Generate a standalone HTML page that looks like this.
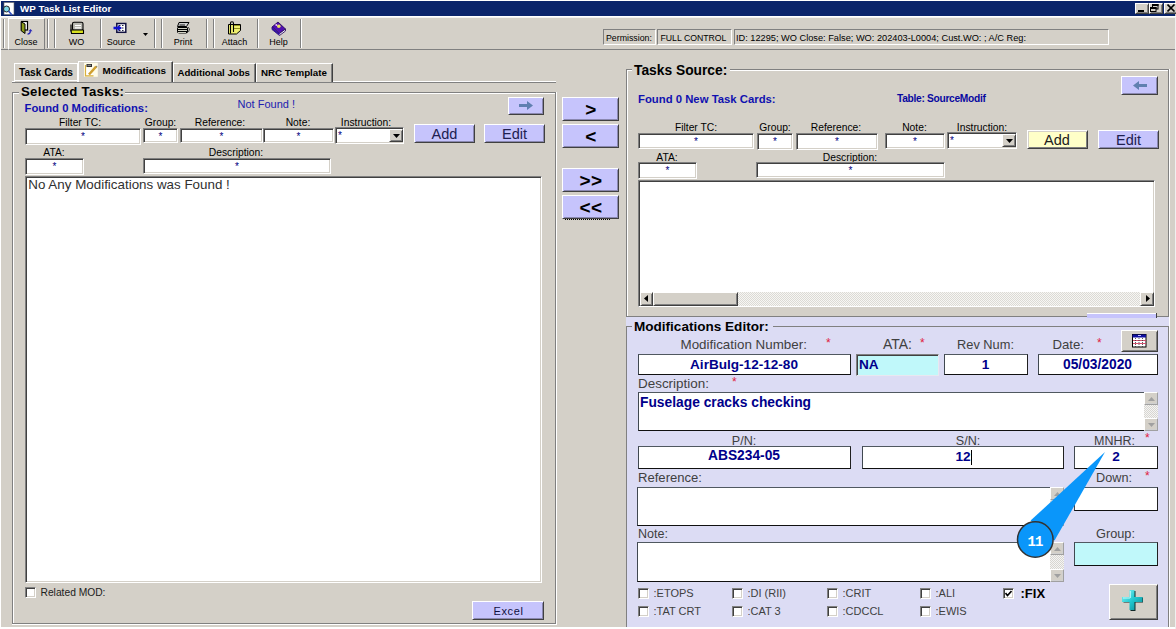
<!DOCTYPE html>
<html><head><meta charset="utf-8"><style>
html,body{margin:0;padding:0;}
body{width:1176px;height:629px;overflow:hidden;position:relative;background:#D4D0C8;font-family:"Liberation Sans",sans-serif;}
body>div,body>svg{position:absolute;}
</style></head><body>
<div style="left:0px;top:0px;width:1176px;height:629px;background:#D4D0C8"></div>
<div style="left:0px;top:0px;width:1px;height:629px;background:#fff"></div>
<div style="left:0px;top:0px;width:1176px;height:1px;background:#fff"></div>
<div style="left:1px;top:1px;width:1174px;height:15px;background:#0A246A"></div>
<svg style="left:2px;top:2px" width="14" height="14" viewBox="0 0 14 14">
<rect x="2" y="0.5" width="10" height="12" fill="#fff" stroke="#666" stroke-width="0.6"/>
<circle cx="4.5" cy="7" r="3" fill="#7fd8e8" stroke="#222" stroke-width="1"/>
<line x1="6.5" y1="9" x2="10" y2="13" stroke="#3050c0" stroke-width="1.6"/></svg>
<div style="left:20px;top:4px;font:bold 9.84px/9.84px 'Liberation Sans',sans-serif;color:#fff;white-space:pre;">WP Task List Editor</div>
<div style="left:1135px;top:3px;width:14px;height:11px;background:#D4D0C8;border:1px solid;border-color:#fff #404040 #404040 #fff;box-shadow:inset 1px 1px #D4D0C8,inset -1px -1px #808080;box-sizing:border-box"></div>
<div style="left:1149px;top:3px;width:14px;height:11px;background:#D4D0C8;border:1px solid;border-color:#fff #404040 #404040 #fff;box-shadow:inset 1px 1px #D4D0C8,inset -1px -1px #808080;box-sizing:border-box"></div>
<div style="left:1164px;top:3px;width:14px;height:11px;background:#D4D0C8;border:1px solid;border-color:#fff #404040 #404040 #fff;box-shadow:inset 1px 1px #D4D0C8,inset -1px -1px #808080;box-sizing:border-box"></div>
<div style="left:1138px;top:10px;width:6px;height:2px;background:#000"></div>
<svg style="left:1149px;top:3px" width="14" height="11" viewBox="1149 3 14 11">
<rect x="1152.5" y="4.5" width="5.5" height="4.5" fill="none" stroke="#000" stroke-width="1"/><rect x="1152" y="4" width="6.5" height="2" fill="#000"/>
<rect x="1150.5" y="7.5" width="5.5" height="4" fill="#D4D0C8" stroke="#000" stroke-width="1"/><rect x="1150" y="7" width="6.5" height="2" fill="#000"/></svg>
<svg style="left:1167px;top:4px" width="9" height="8" viewBox="0 0 9 8"><path d="M0.5 0.5L7.5 7.5M7.5 0.5L0.5 7.5" stroke="#000" stroke-width="1.6"/></svg>
<div style="left:1px;top:16px;width:1175px;height:1px;background:#fff"></div>
<div style="left:1px;top:17px;width:1175px;height:1px;background:#F4F2EE"></div>
<div style="left:1px;top:49px;width:1175px;height:1px;background:#808080"></div>
<div style="left:3px;top:19px;width:1px;height:29px;background:#808080"></div>
<div style="left:4px;top:19px;width:1px;height:29px;background:#fff"></div>
<div style="left:8px;top:18px;width:37px;height:32px;background:#D4D0C8;border:1px solid;border-color:#fff #808080 #808080 #fff;box-shadow:inset 1px 1px #D4D0C8,inset -1px -1px #D4D0C8;box-sizing:border-box"></div>
<div style="left:47px;top:19px;width:1px;height:29px;background:#808080"></div>
<div style="left:48px;top:19px;width:1px;height:29px;background:#fff"></div>
<div style="left:54px;top:19px;width:1px;height:29px;background:#808080"></div>
<div style="left:55px;top:19px;width:1px;height:29px;background:#fff"></div>
<div style="left:100px;top:19px;width:1px;height:29px;background:#808080"></div>
<div style="left:101px;top:19px;width:1px;height:29px;background:#fff"></div>
<div style="left:154px;top:19px;width:1px;height:29px;background:#808080"></div>
<div style="left:155px;top:19px;width:1px;height:29px;background:#fff"></div>
<div style="left:161px;top:19px;width:1px;height:29px;background:#808080"></div>
<div style="left:162px;top:19px;width:1px;height:29px;background:#fff"></div>
<div style="left:206px;top:19px;width:1px;height:29px;background:#808080"></div>
<div style="left:207px;top:19px;width:1px;height:29px;background:#fff"></div>
<div style="left:213px;top:19px;width:1px;height:29px;background:#808080"></div>
<div style="left:214px;top:19px;width:1px;height:29px;background:#fff"></div>
<div style="left:257px;top:19px;width:1px;height:29px;background:#808080"></div>
<div style="left:258px;top:19px;width:1px;height:29px;background:#fff"></div>
<div style="left:300px;top:19px;width:1px;height:29px;background:#808080"></div>
<div style="left:301px;top:19px;width:1px;height:29px;background:#fff"></div>
<div style="left:-274.0px;width:600px;text-align:center;top:38px;font:normal 9px/9px 'Liberation Sans',sans-serif;color:#000;white-space:pre;">Close</div>
<div style="left:-223.5px;width:600px;text-align:center;top:38px;font:normal 9px/9px 'Liberation Sans',sans-serif;color:#000;white-space:pre;">WO</div>
<div style="left:-179.0px;width:600px;text-align:center;top:38px;font:normal 9px/9px 'Liberation Sans',sans-serif;color:#000;white-space:pre;">Source</div>
<div style="left:-117.0px;width:600px;text-align:center;top:38px;font:normal 9px/9px 'Liberation Sans',sans-serif;color:#000;white-space:pre;">Print</div>
<div style="left:-65.5px;width:600px;text-align:center;top:38px;font:normal 9px/9px 'Liberation Sans',sans-serif;color:#000;white-space:pre;">Attach</div>
<div style="left:-21.5px;width:600px;text-align:center;top:38px;font:normal 9px/9px 'Liberation Sans',sans-serif;color:#000;white-space:pre;">Help</div>
<svg style="left:143px;top:33px" width="5" height="3"><path d="M0 0H5L2.5 3Z" fill="#000"/></svg>
<svg style="left:18px;top:19px" width="18" height="18" viewBox="18 19 18 18">
<rect x="21.5" y="21.5" width="6" height="8.5" fill="#fff" stroke="#000" stroke-width="1.2"/>
<path d="M21.2 21.8L25 24V33.5L21.2 30.8Z" fill="#8c9c18" stroke="#000" stroke-width="1"/>
<path d="M27.5 34.2Q30 34.2 30.5 31.2" stroke="#2828b8" stroke-width="1.3" fill="none"/>
<path d="M28.5 31.2H32.5L30.5 29Z" fill="#2828b8"/></svg>
<svg style="left:68px;top:19px" width="18" height="17" viewBox="68 19 18 17">
<rect x="72.5" y="22.3" width="10.5" height="8" rx="1.5" fill="#b8b8b0" stroke="#000" stroke-width="1.1"/>
<path d="M75 25.5H81M75 27.8H81" stroke="#fff" stroke-width="1.2"/>
<path d="M71 24.5V31.5" stroke="#000" stroke-width="1.2"/>
<path d="M71 30H83.5V33.5H71.5Z" fill="#d8e020" stroke="#000" stroke-width="1.1"/></svg>
<svg style="left:112px;top:20px" width="17" height="15" viewBox="112 20 17 15">
<rect x="116.8" y="23.5" width="9" height="8.8" fill="#fff" stroke="#101040" stroke-width="1.5"/>
<path d="M119 25.5h1.5M122 25.5h1.5M122 28h1.5M122 30.5h1.5M119 30.5h1.5" stroke="#202040" stroke-width="1.1"/>
<path d="M113.5 28H119" stroke="#1010d0" stroke-width="2.6"/><path d="M118 25L122 28L118 31Z" fill="#1010d0"/></svg>
<svg style="left:175px;top:20px" width="17" height="16" viewBox="175 20 17 16">
<path d="M179 22.5H189L186.5 26.5H177.5Z" fill="#d0d0d0" stroke="#000" stroke-width="1"/>
<path d="M179.5 25H185" stroke="#000" stroke-width="0.9"/>
<rect x="177" y="26.5" width="11" height="7" rx="2.5" fill="#000"/>
<path d="M178 28.5H187M178 30.5H187M178 32.5H186" stroke="#e8e8d8" stroke-width="0.9"/>
<path d="M188 27L189.5 29L188.5 32" stroke="#404040" stroke-width="1" fill="none"/></svg>
<svg style="left:226px;top:19px" width="17" height="17" viewBox="226 19 17 17">
<path d="M228.5 24.5V34H236.5L240.5 30.5V24.5Z" fill="#f0f070" stroke="#000" stroke-width="1"/>
<path d="M230.5 33.5V23Q230.5 21.8 232 21.8Q233.5 21.8 233.5 23.5V32" stroke="#000" stroke-width="1.1" fill="none"/>
<path d="M234 25.5H240M234 28.5H240" stroke="#909020" stroke-width="1"/></svg>
<svg style="left:270px;top:20px" width="18" height="17" viewBox="270 20 18 17">
<path d="M272 27L278 22L285.5 29L279.5 33.5Z" fill="#5010b0" stroke="#200050" stroke-width="0.8"/>
<path d="M272 27V29.5L279.5 35.5L285.5 31V29L279.5 33.5Z" fill="#f0f0ff" stroke="#200050" stroke-width="0.8"/>
<path d="M272 27V29.5L279.5 35.5V33.5Z" fill="#3010a0"/>
<circle cx="278.8" cy="26.3" r="1.8" fill="#e8e060"/><circle cx="276.3" cy="25" r="1" fill="#f0c0ff"/></svg>
<div style="left:603px;top:29px;width:53px;height:16px;background:#D4D0C8;border:1px solid;border-color:#808080 #fff #fff #808080;box-shadow:inset 1px 1px #D4D0C8,inset -1px -1px #D4D0C8;box-sizing:border-box"></div>
<div style="left:606px;top:34px;font:normal 8.81px/8.81px 'Liberation Sans',sans-serif;color:#000;white-space:pre;">Permission:</div>
<div style="left:657px;top:29px;width:75px;height:16px;background:#D4D0C8;border:1px solid;border-color:#808080 #fff #fff #808080;box-shadow:inset 1px 1px #D4D0C8,inset -1px -1px #D4D0C8;box-sizing:border-box"></div>
<div style="left:660.5px;top:34px;font:normal 8.71px/8.71px 'Liberation Sans',sans-serif;color:#000;white-space:pre;">FULL CONTROL</div>
<div style="left:734px;top:29px;width:375px;height:16px;background:#D4D0C8;border:1px solid;border-color:#808080 #fff #fff #808080;box-shadow:inset 1px 1px #D4D0C8,inset -1px -1px #D4D0C8;box-sizing:border-box"></div>
<div style="left:736px;top:34px;font:normal 9.22px/9.22px 'Liberation Sans',sans-serif;color:#000;white-space:pre;">ID: 12295; WO Close: False; WO: 202403-L0004; Cust.WO: ; A/C Reg:</div>
<div style="left:12px;top:81px;width:544px;height:1px;background:#fff"></div>
<div style="left:12px;top:82px;width:544px;height:1px;background:#808080"></div>
<div style="left:14px;top:63px;width:64px;height:19px;background:#D4D0C8;border-left:1px solid #fff;border-top:1px solid #fff;border-right:1px solid #fff;box-sizing:border-box;"></div>
<div style="left:19px;top:68px;font:bold 10.16px/10.16px 'Liberation Sans',sans-serif;color:#000;white-space:pre;">Task Cards</div>
<div style="left:14px;top:80px;width:64px;height:1px;background:#fff"></div>
<div style="left:173px;top:63px;width:83px;height:19px;background:#D4D0C8;border-left:1px solid #fff;border-top:1px solid #fff;border-right:1px solid #404040;box-sizing:border-box;box-shadow:inset -1px 0 #808080"></div>
<div style="left:177.5px;top:68px;font:bold 9.67px/9.67px 'Liberation Sans',sans-serif;color:#000;white-space:pre;">Additional Jobs</div>
<div style="left:256px;top:63px;width:77px;height:19px;background:#D4D0C8;border-left:1px solid #fff;border-top:1px solid #fff;border-right:1px solid #404040;box-sizing:border-box;box-shadow:inset -1px 0 #808080"></div>
<div style="left:261px;top:68px;font:bold 9.76px/9.76px 'Liberation Sans',sans-serif;color:#000;white-space:pre;">NRC Template</div>
<div style="left:78px;top:61px;width:95px;height:21px;background:#D4D0C8;border-left:1px solid #fff;border-top:1px solid #fff;border-right:1px solid #404040;box-sizing:border-box;box-shadow:inset -1px 0 #808080"></div>
<div style="left:102.5px;top:66px;font:bold 9.85px/9.85px 'Liberation Sans',sans-serif;color:#000;white-space:pre;">Modifications</div>
<svg style="left:83px;top:62px" width="16" height="16" viewBox="83 62 16 16">
<rect x="84" y="62.8" width="13.8" height="14" fill="#fffce8"/>
<path d="M85.5 65V75.8H93.5" stroke="#d8b040" stroke-width="1.2" fill="#fff"/>
<rect x="86.5" y="64" width="5.5" height="3" fill="#303030"/><path d="M87.5 65.3H91" stroke="#c0c0c0" stroke-width="0.8"/>
<path d="M96.2 66.5L89 74.5" stroke="#d0a030" stroke-width="2.6"/>
<path d="M96 65.5L97.5 66.8L96.5 67.5Z" fill="#606060"/></svg>
<div style="left:12px;top:92px;width:544px;height:1px;background:#808080"></div>
<div style="left:13px;top:93px;width:542px;height:1px;background:#fff"></div>
<div style="left:12px;top:92px;width:1px;height:532px;background:#808080"></div>
<div style="left:13px;top:93px;width:1px;height:530px;background:#fff"></div>
<div style="left:12px;top:623px;width:544px;height:1px;background:#808080"></div>
<div style="left:12px;top:624px;width:545px;height:1px;background:#fff"></div>
<div style="left:555px;top:92px;width:1px;height:532px;background:#808080"></div>
<div style="left:556px;top:92px;width:1px;height:533px;background:#fff"></div>
<div style="left:19px;top:84px;width:106px;height:14px;background:#D4D0C8"></div>
<div style="left:21px;top:85px;font:bold 13.2px/13.2px 'Liberation Sans',sans-serif;color:#000;white-space:pre;letter-spacing:0.3px">Selected Tasks:</div>
<div style="left:24.6px;top:103px;font:bold 11.28px/11.28px 'Liberation Sans',sans-serif;color:#1010B0;white-space:pre;">Found 0 Modifications:</div>
<div style="left:237.5px;top:99px;font:normal 11.01px/11.01px 'Liberation Sans',sans-serif;color:#2020B0;white-space:pre;">Not Found !</div>
<div style="left:508px;top:97px;width:36px;height:18px;background:#C6C4FC;border:1px solid;border-color:#fff #404040 #404040 #fff;box-shadow:inset 1px 1px #C6C4FC,inset -1px -1px #8A88B0;box-sizing:border-box"></div>
<svg style="left:519px;top:101px" width="14" height="9" viewBox="0 0 14 9"><path d="M0 3h8V0l6 4.5L8 9V6H0Z" fill="#6080b0"/></svg>
<div style="left:-220.0px;width:600px;text-align:center;top:118px;font:normal 10.3px/10.3px 'Liberation Sans',sans-serif;color:#000;white-space:pre;">Filter TC:</div>
<div style="left:-139.5px;width:600px;text-align:center;top:118px;font:normal 10.3px/10.3px 'Liberation Sans',sans-serif;color:#000;white-space:pre;">Group:</div>
<div style="left:-80.0px;width:600px;text-align:center;top:118px;font:normal 10.3px/10.3px 'Liberation Sans',sans-serif;color:#000;white-space:pre;">Reference:</div>
<div style="left:-2.0px;width:600px;text-align:center;top:118px;font:normal 10.3px/10.3px 'Liberation Sans',sans-serif;color:#000;white-space:pre;">Note:</div>
<div style="left:66.0px;width:600px;text-align:center;top:118px;font:normal 10.3px/10.3px 'Liberation Sans',sans-serif;color:#000;white-space:pre;">Instruction:</div>
<div style="left:25px;top:128px;width:116px;height:17px;background:#fff;border:1px solid;border-color:#808080 #fff #fff #808080;box-shadow:inset 1px 1px #404040,inset -1px -1px #D4D0C8;box-sizing:border-box"></div>
<div style="left:-217.0px;width:600px;text-align:center;top:132px;font:normal 10px/10px 'Liberation Sans',sans-serif;color:#000080;white-space:pre;">*</div>
<div style="left:143px;top:128px;width:35px;height:15px;background:#fff;border:1px solid;border-color:#808080 #fff #fff #808080;box-shadow:inset 1px 1px #404040,inset -1px -1px #D4D0C8;box-sizing:border-box"></div>
<div style="left:-139.5px;width:600px;text-align:center;top:132px;font:normal 10px/10px 'Liberation Sans',sans-serif;color:#000080;white-space:pre;">*</div>
<div style="left:180px;top:128px;width:83px;height:15px;background:#fff;border:1px solid;border-color:#808080 #fff #fff #808080;box-shadow:inset 1px 1px #404040,inset -1px -1px #D4D0C8;box-sizing:border-box"></div>
<div style="left:-78.5px;width:600px;text-align:center;top:132px;font:normal 10px/10px 'Liberation Sans',sans-serif;color:#000080;white-space:pre;">*</div>
<div style="left:263px;top:128px;width:71px;height:15px;background:#fff;border:1px solid;border-color:#808080 #fff #fff #808080;box-shadow:inset 1px 1px #404040,inset -1px -1px #D4D0C8;box-sizing:border-box"></div>
<div style="left:-1.5px;width:600px;text-align:center;top:132px;font:normal 10px/10px 'Liberation Sans',sans-serif;color:#000080;white-space:pre;">*</div>
<div style="left:335px;top:127px;width:69px;height:17px;background:#fff;border:1px solid;border-color:#808080 #fff #fff #808080;box-shadow:inset 1px 1px #404040,inset -1px -1px #D4D0C8;box-sizing:border-box"></div>
<div style="left:338px;top:131px;font:normal 10px/10px 'Liberation Sans',sans-serif;color:#000080;white-space:pre;">*</div>
<div style="left:389px;top:129px;width:14px;height:13px;background:#D4D0C8;border:1px solid;border-color:#fff #404040 #404040 #fff;box-shadow:inset 1px 1px #D4D0C8,inset -1px -1px #808080;box-sizing:border-box"></div>
<svg style="left:393px;top:134px" width="7" height="4"><path d="M0 0H7L3.5 4Z" fill="#000"/></svg>
<div style="left:414px;top:124px;width:61px;height:19px;background:#C6C4FC;border:1px solid;border-color:#fff #404040 #404040 #fff;box-shadow:inset 1px 1px #C6C4FC,inset -1px -1px #8A88B0;box-sizing:border-box"></div>
<div style="left:144.5px;width:600px;text-align:center;top:127px;font:normal 14.5px/14.5px 'Liberation Sans',sans-serif;color:#202050;white-space:pre;">Add</div>
<div style="left:484px;top:124px;width:61px;height:19px;background:#C6C4FC;border:1px solid;border-color:#fff #404040 #404040 #fff;box-shadow:inset 1px 1px #C6C4FC,inset -1px -1px #8A88B0;box-sizing:border-box"></div>
<div style="left:214.5px;width:600px;text-align:center;top:127px;font:normal 14.5px/14.5px 'Liberation Sans',sans-serif;color:#202050;white-space:pre;">Edit</div>
<div style="left:-246.0px;width:600px;text-align:center;top:148px;font:normal 10.3px/10.3px 'Liberation Sans',sans-serif;color:#000;white-space:pre;">ATA:</div>
<div style="left:-64.0px;width:600px;text-align:center;top:148px;font:normal 10.3px/10.3px 'Liberation Sans',sans-serif;color:#000;white-space:pre;">Description:</div>
<div style="left:25px;top:158px;width:59px;height:17px;background:#fff;border:1px solid;border-color:#808080 #fff #fff #808080;box-shadow:inset 1px 1px #404040,inset -1px -1px #D4D0C8;box-sizing:border-box"></div>
<div style="left:-245.5px;width:600px;text-align:center;top:162px;font:normal 10px/10px 'Liberation Sans',sans-serif;color:#000080;white-space:pre;">*</div>
<div style="left:143px;top:158px;width:188px;height:16px;background:#fff;border:1px solid;border-color:#808080 #fff #fff #808080;box-shadow:inset 1px 1px #404040,inset -1px -1px #D4D0C8;box-sizing:border-box"></div>
<div style="left:-63.0px;width:600px;text-align:center;top:162px;font:normal 10px/10px 'Liberation Sans',sans-serif;color:#000080;white-space:pre;">*</div>
<div style="left:25px;top:176px;width:517px;height:407px;background:#fff;border:1px solid;border-color:#808080 #fff #fff #808080;box-shadow:inset 1px 1px #404040,inset -1px -1px #D4D0C8;box-sizing:border-box"></div>
<div style="left:28.3px;top:178px;font:normal 13.38px/13.38px 'Liberation Sans',sans-serif;color:#303030;white-space:pre;">No Any Modifications was Found !</div>
<div style="left:25px;top:587px;width:11px;height:11px;background:#fff;border:1px solid;border-color:#808080 #fff #fff #808080;box-shadow:inset 1px 1px #404040,inset -1px -1px #D4D0C8;box-sizing:border-box"></div>
<div style="left:40.5px;top:588px;font:normal 10.26px/10.26px 'Liberation Sans',sans-serif;color:#202020;white-space:pre;">Related MOD:</div>
<div style="left:472px;top:601px;width:72px;height:19px;background:#C6C4FC;border:1px solid;border-color:#fff #404040 #404040 #fff;box-shadow:inset 1px 1px #C6C4FC,inset -1px -1px #8A88B0;box-sizing:border-box"></div>
<div style="left:208.5px;width:600px;text-align:center;top:606px;font:normal 11px/11px 'Liberation Sans',sans-serif;color:#101040;white-space:pre;letter-spacing:0.6px">Excel</div>
<div style="left:562px;top:97px;width:57px;height:24px;background:#C6C4FC;border:1px solid;border-color:#fff #404040 #404040 #fff;box-shadow:inset 1px 1px #C6C4FC,inset -1px -1px #8A88B0;box-sizing:border-box"></div>
<div style="left:291.0px;width:600px;text-align:center;top:100px;font:bold 19px/19px 'Liberation Sans',sans-serif;color:#000;white-space:pre;letter-spacing:0.5px">&gt;</div>
<div style="left:562px;top:124px;width:57px;height:24px;background:#C6C4FC;border:1px solid;border-color:#fff #404040 #404040 #fff;box-shadow:inset 1px 1px #C6C4FC,inset -1px -1px #8A88B0;box-sizing:border-box"></div>
<div style="left:291.0px;width:600px;text-align:center;top:127px;font:bold 19px/19px 'Liberation Sans',sans-serif;color:#000;white-space:pre;letter-spacing:0.5px">&lt;</div>
<div style="left:562px;top:168px;width:57px;height:24px;background:#C6C4FC;border:1px solid;border-color:#fff #404040 #404040 #fff;box-shadow:inset 1px 1px #C6C4FC,inset -1px -1px #8A88B0;box-sizing:border-box"></div>
<div style="left:291.0px;width:600px;text-align:center;top:171px;font:bold 19px/19px 'Liberation Sans',sans-serif;color:#000;white-space:pre;letter-spacing:0.5px">&gt;&gt;</div>
<div style="left:562px;top:195px;width:57px;height:24px;background:#C6C4FC;border:1px solid;border-color:#fff #404040 #404040 #fff;box-shadow:inset 1px 1px #C6C4FC,inset -1px -1px #8A88B0;box-sizing:border-box"></div>
<div style="left:291.0px;width:600px;text-align:center;top:198px;font:bold 19px/19px 'Liberation Sans',sans-serif;color:#000;white-space:pre;letter-spacing:0.5px">&lt;&lt;</div>
<div style="left:565px;top:219px;width:46px;height:1px;background:repeating-linear-gradient(90deg,#000 0 1px,transparent 1px 2px)"></div>
<div style="left:626px;top:69px;width:543px;height:1px;background:#808080"></div>
<div style="left:627px;top:70px;width:541px;height:1px;background:#fff"></div>
<div style="left:626px;top:69px;width:1px;height:248px;background:#808080"></div>
<div style="left:627px;top:70px;width:1px;height:246px;background:#fff"></div>
<div style="left:626px;top:316px;width:543px;height:1px;background:#808080"></div>
<div style="left:626px;top:317px;width:544px;height:1px;background:#fff"></div>
<div style="left:1168px;top:69px;width:1px;height:248px;background:#808080"></div>
<div style="left:1169px;top:69px;width:1px;height:249px;background:#fff"></div>
<div style="left:632px;top:62px;width:98px;height:14px;background:#D4D0C8"></div>
<div style="left:634px;top:64px;font:bold 13.81px/13.81px 'Liberation Sans',sans-serif;color:#000;white-space:pre;">Tasks Source:</div>
<div style="left:638px;top:94px;font:bold 11.33px/11.33px 'Liberation Sans',sans-serif;color:#1010B0;white-space:pre;">Found 0 New Task Cards:</div>
<div style="left:897px;top:94px;font:bold 10.21px/10.21px 'Liberation Sans',sans-serif;color:#0808A0;white-space:pre;letter-spacing:-0.3px">Table: SourceModif</div>
<div style="left:1121px;top:76px;width:37px;height:19px;background:#C6C4FC;border:1px solid;border-color:#fff #404040 #404040 #fff;box-shadow:inset 1px 1px #C6C4FC,inset -1px -1px #8A88B0;box-sizing:border-box"></div>
<svg style="left:1133px;top:81px" width="14" height="9" viewBox="0 0 14 9"><path d="M14 3H6V0L0 4.5L6 9V6H14Z" fill="#6080b0"/></svg>
<div style="left:396.0px;width:600px;text-align:center;top:123px;font:normal 10.3px/10.3px 'Liberation Sans',sans-serif;color:#000;white-space:pre;">Filter TC:</div>
<div style="left:475.0px;width:600px;text-align:center;top:123px;font:normal 10.3px/10.3px 'Liberation Sans',sans-serif;color:#000;white-space:pre;">Group:</div>
<div style="left:536.0px;width:600px;text-align:center;top:123px;font:normal 10.3px/10.3px 'Liberation Sans',sans-serif;color:#000;white-space:pre;">Reference:</div>
<div style="left:614.5px;width:600px;text-align:center;top:123px;font:normal 10.3px/10.3px 'Liberation Sans',sans-serif;color:#000;white-space:pre;">Note:</div>
<div style="left:682.0px;width:600px;text-align:center;top:123px;font:normal 10.3px/10.3px 'Liberation Sans',sans-serif;color:#000;white-space:pre;">Instruction:</div>
<div style="left:638px;top:133px;width:116px;height:16px;background:#fff;border:1px solid;border-color:#808080 #fff #fff #808080;box-shadow:inset 1px 1px #404040,inset -1px -1px #D4D0C8;box-sizing:border-box"></div>
<div style="left:396.0px;width:600px;text-align:center;top:137px;font:normal 10px/10px 'Liberation Sans',sans-serif;color:#000080;white-space:pre;">*</div>
<div style="left:757px;top:133px;width:36px;height:17px;background:#fff;border:1px solid;border-color:#808080 #fff #fff #808080;box-shadow:inset 1px 1px #404040,inset -1px -1px #D4D0C8;box-sizing:border-box"></div>
<div style="left:475.0px;width:600px;text-align:center;top:137px;font:normal 10px/10px 'Liberation Sans',sans-serif;color:#000080;white-space:pre;">*</div>
<div style="left:796px;top:133px;width:82px;height:17px;background:#fff;border:1px solid;border-color:#808080 #fff #fff #808080;box-shadow:inset 1px 1px #404040,inset -1px -1px #D4D0C8;box-sizing:border-box"></div>
<div style="left:537.0px;width:600px;text-align:center;top:137px;font:normal 10px/10px 'Liberation Sans',sans-serif;color:#000080;white-space:pre;">*</div>
<div style="left:885px;top:133px;width:60px;height:16px;background:#fff;border:1px solid;border-color:#808080 #fff #fff #808080;box-shadow:inset 1px 1px #404040,inset -1px -1px #D4D0C8;box-sizing:border-box"></div>
<div style="left:615.0px;width:600px;text-align:center;top:137px;font:normal 10px/10px 'Liberation Sans',sans-serif;color:#000080;white-space:pre;">*</div>
<div style="left:947px;top:132px;width:70px;height:17px;background:#fff;border:1px solid;border-color:#808080 #fff #fff #808080;box-shadow:inset 1px 1px #404040,inset -1px -1px #D4D0C8;box-sizing:border-box"></div>
<div style="left:950px;top:136px;font:normal 10px/10px 'Liberation Sans',sans-serif;color:#000080;white-space:pre;">*</div>
<div style="left:1002px;top:134px;width:14px;height:13px;background:#D4D0C8;border:1px solid;border-color:#fff #404040 #404040 #fff;box-shadow:inset 1px 1px #D4D0C8,inset -1px -1px #808080;box-sizing:border-box"></div>
<svg style="left:1006px;top:139px" width="7" height="4"><path d="M0 0H7L3.5 4Z" fill="#000"/></svg>
<div style="left:1027px;top:130px;width:61px;height:19px;background:#FFFFC8;border:1px solid;border-color:#fff #404040 #404040 #fff;box-shadow:inset 1px 1px #D4D0C8,inset -1px -1px #808080;box-sizing:border-box"></div>
<div style="left:757.0px;width:600px;text-align:center;top:133px;font:normal 14.5px/14.5px 'Liberation Sans',sans-serif;color:#202020;white-space:pre;">Add</div>
<div style="left:1098px;top:130px;width:61px;height:19px;background:#C6C4FC;border:1px solid;border-color:#fff #404040 #404040 #fff;box-shadow:inset 1px 1px #C6C4FC,inset -1px -1px #8A88B0;box-sizing:border-box"></div>
<div style="left:828.5px;width:600px;text-align:center;top:133px;font:normal 14.5px/14.5px 'Liberation Sans',sans-serif;color:#202050;white-space:pre;">Edit</div>
<div style="left:367.0px;width:600px;text-align:center;top:153px;font:normal 10.3px/10.3px 'Liberation Sans',sans-serif;color:#000;white-space:pre;">ATA:</div>
<div style="left:550.0px;width:600px;text-align:center;top:153px;font:normal 10.3px/10.3px 'Liberation Sans',sans-serif;color:#000;white-space:pre;">Description:</div>
<div style="left:638px;top:162px;width:59px;height:17px;background:#fff;border:1px solid;border-color:#808080 #fff #fff #808080;box-shadow:inset 1px 1px #404040,inset -1px -1px #D4D0C8;box-sizing:border-box"></div>
<div style="left:367.5px;width:600px;text-align:center;top:166px;font:normal 10px/10px 'Liberation Sans',sans-serif;color:#000080;white-space:pre;">*</div>
<div style="left:756px;top:162px;width:189px;height:16px;background:#fff;border:1px solid;border-color:#808080 #fff #fff #808080;box-shadow:inset 1px 1px #404040,inset -1px -1px #D4D0C8;box-sizing:border-box"></div>
<div style="left:550.5px;width:600px;text-align:center;top:166px;font:normal 10px/10px 'Liberation Sans',sans-serif;color:#000080;white-space:pre;">*</div>
<div style="left:638px;top:180px;width:517px;height:127px;background:#fff;border:1px solid;border-color:#808080 #fff #fff #808080;box-shadow:inset 1px 1px #404040,inset -1px -1px #D4D0C8;box-sizing:border-box"></div>
<div style="left:640px;top:292px;width:513px;height:14px;background:repeating-conic-gradient(#F6F6F4 0 25%, #DCDAD4 0 50%) 0 0/2px 2px"></div>
<div style="left:640px;top:292px;width:13px;height:14px;background:#D4D0C8;border:1px solid;border-color:#fff #404040 #404040 #fff;box-shadow:inset 1px 1px #D4D0C8,inset -1px -1px #808080;box-sizing:border-box"></div>
<svg style="left:644px;top:295px" width="4" height="7"><path d="M4 0V7L0 3.5Z" fill="#000"/></svg>
<div style="left:653px;top:292px;width:85px;height:14px;background:#D4D0C8;border:1px solid;border-color:#fff #404040 #404040 #fff;box-shadow:inset 1px 1px #D4D0C8,inset -1px -1px #808080;box-sizing:border-box"></div>
<div style="left:1140px;top:292px;width:14px;height:14px;background:#D4D0C8;border:1px solid;border-color:#fff #404040 #404040 #fff;box-shadow:inset 1px 1px #D4D0C8,inset -1px -1px #808080;box-sizing:border-box"></div>
<svg style="left:1146px;top:295px" width="4" height="7"><path d="M0 0V7L4 3.5Z" fill="#000"/></svg>
<div style="left:626px;top:317px;width:543px;height:310px;background:#DCDCF4"></div>
<div style="left:1087px;top:313px;width:70px;height:5px;background:#C6C4FC;border-top:1px solid #fff;box-sizing:border-box"></div>
<div style="left:1156px;top:313px;width:1px;height:5px;background:#404040"></div>
<div style="left:626px;top:326px;width:6px;height:1px;background:#808080"></div>
<div style="left:773px;top:326px;width:396px;height:1px;background:#808080"></div>
<div style="left:626px;top:326px;width:1px;height:301px;background:#808080"></div>
<div style="left:1168px;top:326px;width:1px;height:301px;background:#808080"></div>
<div style="left:634px;top:320px;font:bold 13.55px/13.55px 'Liberation Sans',sans-serif;color:#000;white-space:pre;">Modifications Editor:</div>
<div style="left:680.5px;top:338px;font:normal 13.39px/13.39px 'Liberation Sans',sans-serif;color:#404040;white-space:pre;">Modification Number:</div>
<div style="left:826px;top:337px;font:normal 12px/12px 'Liberation Sans',sans-serif;color:#E02040;white-space:pre;">*</div>
<div style="left:883px;top:337px;font:normal 13.98px/13.98px 'Liberation Sans',sans-serif;color:#404040;white-space:pre;">ATA:</div>
<div style="left:920px;top:337px;font:normal 12px/12px 'Liberation Sans',sans-serif;color:#E02040;white-space:pre;">*</div>
<div style="left:957px;top:339px;font:normal 12.82px/12.82px 'Liberation Sans',sans-serif;color:#404040;white-space:pre;">Rev Num:</div>
<div style="left:1052.5px;top:338px;font:normal 13.18px/13.18px 'Liberation Sans',sans-serif;color:#404040;white-space:pre;">Date:</div>
<div style="left:1097px;top:337px;font:normal 12px/12px 'Liberation Sans',sans-serif;color:#E02040;white-space:pre;">*</div>
<div style="left:1121px;top:330px;width:37px;height:22px;background:#D4D0C8;border:1px solid;border-color:#fff #404040 #404040 #fff;box-shadow:inset 1px 1px #D4D0C8,inset -1px -1px #808080;box-sizing:border-box"></div>
<svg style="left:1131px;top:333px" width="17" height="16" viewBox="1131 333 17 16">
<rect x="1132.5" y="334.5" width="13.5" height="12.5" fill="#fff" stroke="#000" stroke-width="1"/>
<rect x="1132.5" y="334.5" width="13.5" height="3" fill="#1010a0"/>
<path d="M1138 335.5h3" stroke="#c0c0ff" stroke-width="1"/>
<path d="M1133 340.5h13M1133 343.5h13" stroke="#d04060" stroke-width="0.9"/>
<path d="M1135.5 338v9M1139 338v9M1142.5 338v9" stroke="#303030" stroke-width="0.8" stroke-dasharray="1 1"/></svg>
<div style="left:638px;top:354px;width:213px;height:21px;background:#fff;border:1px solid #303030;box-sizing:border-box;border-color:#505860 #202020 #101010 #404850"></div>
<div style="left:444.0px;width:600px;text-align:center;top:358px;font:bold 13.59px/13.59px 'Liberation Sans',sans-serif;color:#00008B;white-space:pre;">AirBulg-12-12-80</div>
<div style="left:856px;top:354px;width:83px;height:22px;background:#C0F8FA;border:1px solid;border-color:#808080 #E8E8F0 #E8E8F0 #808080;box-shadow:inset 1px 1px #404040,inset -1px -1px #C0F8FA;box-sizing:border-box"></div>
<div style="left:859px;top:358px;font:bold 13.6px/13.6px 'Liberation Sans',sans-serif;color:#00008B;white-space:pre;">NA</div>
<div style="left:944px;top:354px;width:84px;height:21px;background:#fff;border:1px solid #303030;box-sizing:border-box;border-color:#505860 #202020 #101010 #404850"></div>
<div style="left:685.5px;width:600px;text-align:center;top:358px;font:bold 13.6px/13.6px 'Liberation Sans',sans-serif;color:#00008B;white-space:pre;">1</div>
<div style="left:1038px;top:354px;width:120px;height:21px;background:#fff;border:1px solid #303030;box-sizing:border-box;border-color:#505860 #202020 #101010 #404850"></div>
<div style="left:797.5px;width:600px;text-align:center;top:358px;font:bold 13.79px/13.79px 'Liberation Sans',sans-serif;color:#00008B;white-space:pre;">05/03/2020</div>
<div style="left:638px;top:377px;font:normal 13.45px/13.45px 'Liberation Sans',sans-serif;color:#404040;white-space:pre;">Description:</div>
<div style="left:732px;top:376px;font:normal 12px/12px 'Liberation Sans',sans-serif;color:#E02040;white-space:pre;">*</div>
<div style="left:638px;top:392px;width:507px;height:39px;background:#fff;border:1px solid #303030;box-sizing:border-box;border-color:#505860 #202020 #101010 #404850"></div>
<div style="left:640px;top:396px;font:bold 13.8px/13.8px 'Liberation Sans',sans-serif;color:#00008B;white-space:pre;">Fuselage cracks checking</div>
<div style="left:1144px;top:392px;width:14px;height:39px;background:repeating-conic-gradient(#F4F4F4 0 25%, #D8D6D0 0 50%) 0 0/2px 2px"></div>
<div style="left:1144px;top:392px;width:14px;height:13px;background:#D4D0C8;border:1px solid;border-color:#fff #a0a0a0 #a0a0a0 #fff;box-shadow:inset 1px 1px #D4D0C8,inset -1px -1px #d0d0d0;box-sizing:border-box"></div>
<div style="left:1144px;top:418px;width:14px;height:13px;background:#D4D0C8;border:1px solid;border-color:#fff #a0a0a0 #a0a0a0 #fff;box-shadow:inset 1px 1px #D4D0C8,inset -1px -1px #d0d0d0;box-sizing:border-box"></div>
<svg style="left:1148px;top:397px" width="7" height="4"><path d="M0 4H7L3.5 0Z" fill="#a0a0a0"/></svg>
<svg style="left:1148px;top:423px" width="7" height="4"><path d="M0 0H7L3.5 4Z" fill="#a0a0a0"/></svg>
<div style="left:444.0px;width:600px;text-align:center;top:435px;font:normal 12.6px/12.6px 'Liberation Sans',sans-serif;color:#404040;white-space:pre;">P/N:</div>
<div style="left:638px;top:446px;width:213px;height:23px;background:#fff;border:1px solid #303030;box-sizing:border-box;border-color:#505860 #202020 #101010 #404850"></div>
<div style="left:444.0px;width:600px;text-align:center;top:449px;font:bold 13.78px/13.78px 'Liberation Sans',sans-serif;color:#00008B;white-space:pre;">ABS234-05</div>
<div style="left:668.0px;width:600px;text-align:center;top:435px;font:normal 12.6px/12.6px 'Liberation Sans',sans-serif;color:#404040;white-space:pre;">S/N:</div>
<div style="left:862px;top:446px;width:202px;height:23px;background:#fff;border:1px solid #303030;box-sizing:border-box;border-color:#505860 #202020 #101010 #404850"></div>
<div style="left:663.0px;width:600px;text-align:center;top:450px;font:bold 13.6px/13.6px 'Liberation Sans',sans-serif;color:#00008B;white-space:pre;">12</div>
<div style="left:971px;top:450px;width:1px;height:15px;background:#000"></div>
<div style="left:1094px;top:435px;font:normal 12.51px/12.51px 'Liberation Sans',sans-serif;color:#404040;white-space:pre;">MNHR:</div>
<div style="left:1145px;top:432px;font:normal 12px/12px 'Liberation Sans',sans-serif;color:#E02040;white-space:pre;">*</div>
<div style="left:1074px;top:446px;width:84px;height:23px;background:#fff;border:1px solid #303030;box-sizing:border-box;border-color:#505860 #202020 #101010 #404850"></div>
<div style="left:816.0px;width:600px;text-align:center;top:450px;font:bold 13.6px/13.6px 'Liberation Sans',sans-serif;color:#00008B;white-space:pre;">2</div>
<div style="left:638px;top:471px;font:normal 13.08px/13.08px 'Liberation Sans',sans-serif;color:#404040;white-space:pre;">Reference:</div>
<div style="left:637px;top:487px;width:414px;height:39px;background:#fff;border:1px solid #303030;box-sizing:border-box;border-color:#505860 #202020 #101010 #404850"></div>
<div style="left:1050px;top:487px;width:14px;height:39px;background:repeating-conic-gradient(#F4F4F4 0 25%, #D8D6D0 0 50%) 0 0/2px 2px"></div>
<div style="left:1050px;top:487px;width:14px;height:13px;background:#D4D0C8;border:1px solid;border-color:#fff #a0a0a0 #a0a0a0 #fff;box-shadow:inset 1px 1px #D4D0C8,inset -1px -1px #d0d0d0;box-sizing:border-box"></div>
<div style="left:1050px;top:513px;width:14px;height:13px;background:#D4D0C8;border:1px solid;border-color:#fff #a0a0a0 #a0a0a0 #fff;box-shadow:inset 1px 1px #D4D0C8,inset -1px -1px #d0d0d0;box-sizing:border-box"></div>
<svg style="left:1054px;top:492px" width="7" height="4"><path d="M0 4H7L3.5 0Z" fill="#a0a0a0"/></svg>
<svg style="left:1054px;top:518px" width="7" height="4"><path d="M0 0H7L3.5 4Z" fill="#a0a0a0"/></svg>
<div style="left:1096px;top:472px;font:normal 12.7px/12.7px 'Liberation Sans',sans-serif;color:#404040;white-space:pre;">Down:</div>
<div style="left:1145px;top:470px;font:normal 12px/12px 'Liberation Sans',sans-serif;color:#E02040;white-space:pre;">*</div>
<div style="left:1074px;top:487px;width:84px;height:24px;background:#fff;border:1px solid #303030;box-sizing:border-box;border-color:#505860 #202020 #101010 #404850"></div>
<div style="left:638px;top:528px;font:normal 12.55px/12.55px 'Liberation Sans',sans-serif;color:#404040;white-space:pre;">Note:</div>
<div style="left:637px;top:542px;width:414px;height:40px;background:#fff;border:1px solid #303030;box-sizing:border-box;border-color:#505860 #202020 #101010 #404850"></div>
<div style="left:1050px;top:542px;width:14px;height:40px;background:repeating-conic-gradient(#F4F4F4 0 25%, #D8D6D0 0 50%) 0 0/2px 2px"></div>
<div style="left:1050px;top:542px;width:14px;height:13px;background:#D4D0C8;border:1px solid;border-color:#fff #a0a0a0 #a0a0a0 #fff;box-shadow:inset 1px 1px #D4D0C8,inset -1px -1px #d0d0d0;box-sizing:border-box"></div>
<div style="left:1050px;top:569px;width:14px;height:13px;background:#D4D0C8;border:1px solid;border-color:#fff #a0a0a0 #a0a0a0 #fff;box-shadow:inset 1px 1px #D4D0C8,inset -1px -1px #d0d0d0;box-sizing:border-box"></div>
<svg style="left:1054px;top:547px" width="7" height="4"><path d="M0 4H7L3.5 0Z" fill="#a0a0a0"/></svg>
<svg style="left:1054px;top:574px" width="7" height="4"><path d="M0 0H7L3.5 4Z" fill="#a0a0a0"/></svg>
<div style="left:1096px;top:528px;font:normal 12.76px/12.76px 'Liberation Sans',sans-serif;color:#404040;white-space:pre;">Group:</div>
<div style="left:1074px;top:542px;width:84px;height:24px;background:#C0F8FA;border:1px solid #303030;box-sizing:border-box;border-color:#505860 #202020 #101010 #404850"></div>
<div style="left:638px;top:588px;width:11px;height:11px;background:#fff;border:1px solid;border-color:#808080 #fff #fff #808080;box-shadow:inset 1px 1px #404040,inset -1px -1px #D4D0C8;box-sizing:border-box"></div>
<div style="left:653.5px;top:588px;font:normal 11px/11px 'Liberation Sans',sans-serif;color:#404040;white-space:pre;">:ETOPS</div>
<div style="left:732px;top:588px;width:11px;height:11px;background:#fff;border:1px solid;border-color:#808080 #fff #fff #808080;box-shadow:inset 1px 1px #404040,inset -1px -1px #D4D0C8;box-sizing:border-box"></div>
<div style="left:747.5px;top:588px;font:normal 11px/11px 'Liberation Sans',sans-serif;color:#404040;white-space:pre;">:DI (RII)</div>
<div style="left:827px;top:588px;width:11px;height:11px;background:#fff;border:1px solid;border-color:#808080 #fff #fff #808080;box-shadow:inset 1px 1px #404040,inset -1px -1px #D4D0C8;box-sizing:border-box"></div>
<div style="left:842.5px;top:588px;font:normal 11px/11px 'Liberation Sans',sans-serif;color:#404040;white-space:pre;">:CRIT</div>
<div style="left:920px;top:588px;width:11px;height:11px;background:#fff;border:1px solid;border-color:#808080 #fff #fff #808080;box-shadow:inset 1px 1px #404040,inset -1px -1px #D4D0C8;box-sizing:border-box"></div>
<div style="left:935.5px;top:588px;font:normal 11px/11px 'Liberation Sans',sans-serif;color:#404040;white-space:pre;">:ALI</div>
<div style="left:638px;top:606px;width:11px;height:11px;background:#fff;border:1px solid;border-color:#808080 #fff #fff #808080;box-shadow:inset 1px 1px #404040,inset -1px -1px #D4D0C8;box-sizing:border-box"></div>
<div style="left:653.5px;top:606px;font:normal 11px/11px 'Liberation Sans',sans-serif;color:#404040;white-space:pre;">:TAT CRT</div>
<div style="left:732px;top:606px;width:11px;height:11px;background:#fff;border:1px solid;border-color:#808080 #fff #fff #808080;box-shadow:inset 1px 1px #404040,inset -1px -1px #D4D0C8;box-sizing:border-box"></div>
<div style="left:747.5px;top:606px;font:normal 11px/11px 'Liberation Sans',sans-serif;color:#404040;white-space:pre;">:CAT 3</div>
<div style="left:827px;top:606px;width:11px;height:11px;background:#fff;border:1px solid;border-color:#808080 #fff #fff #808080;box-shadow:inset 1px 1px #404040,inset -1px -1px #D4D0C8;box-sizing:border-box"></div>
<div style="left:842.5px;top:606px;font:normal 11px/11px 'Liberation Sans',sans-serif;color:#404040;white-space:pre;">:CDCCL</div>
<div style="left:920px;top:606px;width:11px;height:11px;background:#fff;border:1px solid;border-color:#808080 #fff #fff #808080;box-shadow:inset 1px 1px #404040,inset -1px -1px #D4D0C8;box-sizing:border-box"></div>
<div style="left:935.5px;top:606px;font:normal 11px/11px 'Liberation Sans',sans-serif;color:#404040;white-space:pre;">:EWIS</div>
<div style="left:1003px;top:588px;width:11px;height:11px;background:#fff;border:1px solid;border-color:#808080 #fff #fff #808080;box-shadow:inset 1px 1px #404040,inset -1px -1px #D4D0C8;box-sizing:border-box"></div>
<svg style="left:1005px;top:590px" width="7" height="7"><path d="M0.5 3L2.5 5.5L6.5 1" stroke="#000" stroke-width="1.6" fill="none"/></svg>
<div style="left:1020.5px;top:587px;font:bold 13px/13px 'Liberation Sans',sans-serif;color:#000;white-space:pre;">:FIX</div>
<div style="left:1109px;top:584px;width:49px;height:36px;background:#D4D0C8;border:1px solid;border-color:#fff #404040 #404040 #fff;box-shadow:inset 1px 1px #D4D0C8,inset -1px -1px #808080;box-sizing:border-box"></div>
<svg style="left:1118px;top:586px" width="30" height="28" viewBox="1118 586 30 28">
<defs><linearGradient id="pg" x1="0" y1="0" x2="1" y2="1"><stop offset="0" stop-color="#90f8f8"/><stop offset="0.5" stop-color="#20c8d0"/><stop offset="1" stop-color="#108890"/></linearGradient></defs>
<path d="M1130.5 591h5v6.5h7.5v5h-7.5v8.5h-5v-8.5h-7v-5h7Z" fill="#102828"/>
<path d="M1129.5 590h5v7h8v5h-8v8h-5v-8h-7.5v-5h7.5Z" fill="url(#pg)"/>
<path d="M1130.3 591v7M1123 598h7" stroke="#d0ffff" stroke-width="0.9"/></svg>
<div style="left:1169px;top:317px;width:1px;height:312px;background:#fff"></div>
<div style="left:1170px;top:50px;width:6px;height:579px;background:#D4D0C8"></div>
<div style="left:0px;top:627px;width:1176px;height:1px;background:#fff"></div>
<div style="left:0px;top:628px;width:1176px;height:1px;background:#fff"></div>
<div style="left:1175px;top:17px;width:1px;height:612px;background:#F0F0F0"></div>
<svg style="left:1010px;top:445px" width="110" height="120" viewBox="1010 445 110 120">
<path d="M1105 452L1030.6 520.6L1054.5 540.6Z" fill="#0A96FA"/>
<circle cx="1035.3" cy="539.5" r="17.8" fill="#0A96FA" stroke="#333" stroke-width="1.5"/>
<text x="1035" y="546" text-anchor="middle" font-family="Liberation Mono" font-weight="bold" font-size="14" letter-spacing="-1" fill="#fff">11</text></svg>
</body></html>
